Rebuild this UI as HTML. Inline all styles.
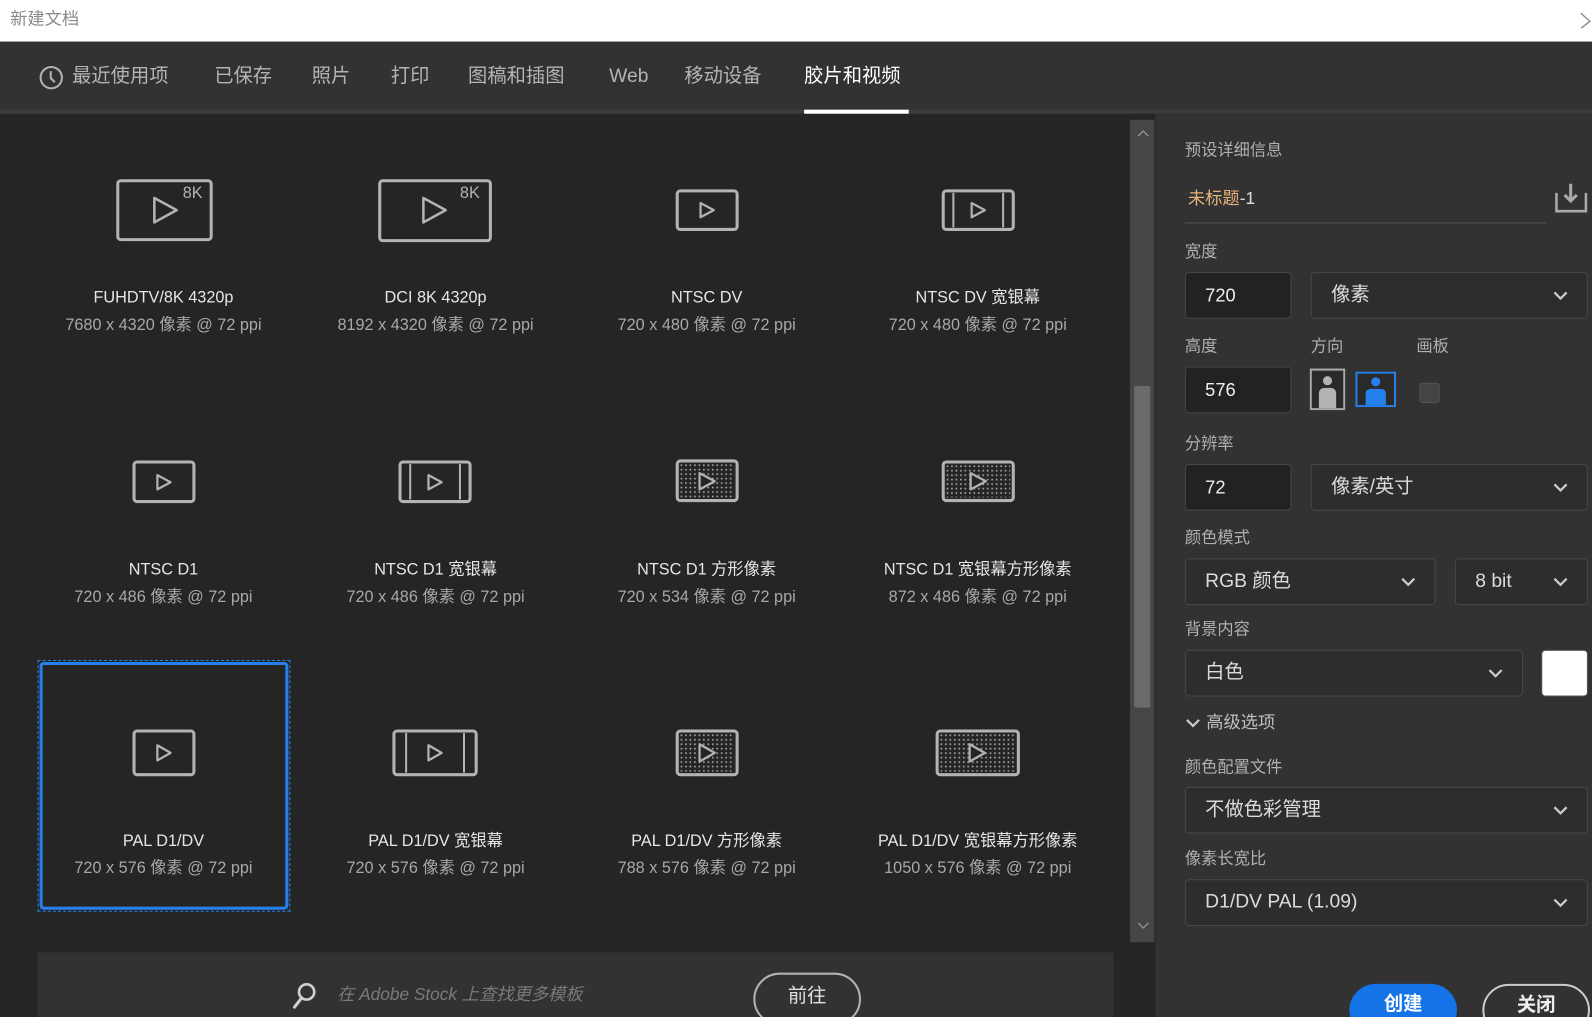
<!DOCTYPE html>
<html><head><meta charset="utf-8"><style>
*{margin:0;padding:0;box-sizing:border-box}
html,body{width:1592px;height:1017px;overflow:hidden;background:#252525}
body{font-family:"Liberation Sans","Noto Sans CJK SC",sans-serif}
#w{position:absolute;left:0;top:0;width:1568px;height:1002px;transform:scale(1.01531);transform-origin:0 0;overflow:hidden;background:#252525}
.a{position:absolute}
.t{position:absolute;white-space:nowrap;line-height:24px}
.tab{position:absolute;top:64px;font-size:19px;line-height:24px;height:24px;color:#b4b4b4}
.nm{position:absolute;width:260px;text-align:center;font-size:16px;line-height:20px;height:20px;color:#e6e6e6}
.sz{position:absolute;width:260px;text-align:center;font-size:16px;line-height:20px;height:20px;color:#a8a8a8}
.lbl{position:absolute;font-size:16px;line-height:20px;color:#b0b0b0}
.inp{position:absolute;background:#222;border:1px solid #474747;border-radius:4px;color:#f0f0f0;font-size:18px;line-height:22px;padding-left:19px;display:flex;align-items:center}
.dd{position:absolute;background:#2d2d2d;border:1px solid #474747;border-radius:4px;color:#dcdcdc;font-size:19px;line-height:24px;padding-left:19px;display:flex;align-items:center}
.dd span,.inp span{display:block;height:24px;line-height:24px}
.dd svg{position:absolute;right:18px;top:50%;margin-top:-5px}
</style></head><body><div id="w">
<svg width="0" height="0" style="position:absolute"><defs>
<pattern id="dots" width="4.4" height="4.4" patternUnits="userSpaceOnUse"><rect x="1" y="1" width="1.6" height="1.6" fill="#a8a8a8"/></pattern>
</defs></svg>
<div class="a" style="left:0;top:0;width:1568px;height:41px;background:#fff"></div>
<div class="t" style="left:10px;top:7px;font-size:17px;color:#8a8a8a">新建文档</div>
<svg class="a" style="left:1556px;top:12px" width="14" height="16"><path d="M1 1 L10 9 L1 16" stroke="#888" stroke-width="1.3" fill="none"/></svg>
<div class="a" style="left:0;top:41px;width:1568px;height:71px;background:#323232"></div>
<div class="a" style="left:0;top:108px;width:1568px;height:4px;background:#3c3c3c"></div>
<div class="a" style="left:792px;top:108px;width:103px;height:4px;background:#fff"></div>
<svg class="a" style="left:38px;top:64px" width="25" height="25"><circle cx="12.5" cy="12.5" r="10.5" stroke="#b4b4b4" stroke-width="2" fill="none"/><path d="M12 6 V13 L16 17" stroke="#b4b4b4" stroke-width="2" fill="none"/></svg>
<div class="tab" style="left:71px">最近使用项</div>
<div class="tab" style="left:211px">已保存</div>
<div class="tab" style="left:307px">照片</div>
<div class="tab" style="left:385px">打印</div>
<div class="tab" style="left:461px">图稿和插图</div>
<div class="tab" style="left:600px">Web</div>
<div class="tab" style="left:674px">移动设备</div>
<div class="tab" style="left:792px;color:#fff">胶片和视频</div>
<div class="a" style="left:1113px;top:118px;width:24px;height:810px;background:#464646"></div>
<div class="a" style="left:1117px;top:380px;width:16px;height:317px;background:#6a6a6a;border-radius:2px"></div>
<svg class="a" style="left:1120px;top:128px" width="12" height="8"><path d="M1 6 L6 1 L11 6" stroke="#999" stroke-width="1.2" fill="none"/></svg>
<svg class="a" style="left:1120px;top:908px" width="12" height="8"><path d="M1 1 L6 6 L11 1" stroke="#999" stroke-width="1.2" fill="none"/></svg>
<div class="a" style="left:1138px;top:112px;width:430px;height:890px;background:#323232"></div>

<svg class="a" style="left:114px;top:176px" width="96" height="62"><rect x="2" y="2" width="92" height="58" rx="3" stroke="#b3b3b3" stroke-width="3" fill="none"/><path d="M38 19 V43 L60 31 Z" stroke="#b3b3b3" stroke-width="2.5" fill="none" stroke-linejoin="round"/><text x="66" y="19" font-size="16" fill="#b3b3b3" font-family="Liberation Sans">8K</text></svg>
<svg class="a" style="left:372px;top:176px" width="113" height="63"><rect x="2" y="2" width="109" height="59" rx="3" stroke="#b3b3b3" stroke-width="3" fill="none"/><path d="M45 19 V43 L67 31 Z" stroke="#b3b3b3" stroke-width="2.5" fill="none" stroke-linejoin="round"/><text x="81" y="19" font-size="16" fill="#b3b3b3" font-family="Liberation Sans">8K</text></svg>
<svg class="a" style="left:665px;top:186px" width="63" height="42"><rect x="2" y="2" width="59" height="38" rx="3" stroke="#b3b3b3" stroke-width="3" fill="none"/><path d="M25 14 V28 L38 21 Z" stroke="#b3b3b3" stroke-width="2.2" fill="none" stroke-linejoin="round"/></svg>
<svg class="a" style="left:927px;top:186px" width="73" height="42"><rect x="2" y="2" width="69" height="38" rx="3" stroke="#b3b3b3" stroke-width="3" fill="none"/><path d="M12 4 V38 M61 4 V38" stroke="#b3b3b3" stroke-width="2"/><path d="M30 14 V28 L43 21 Z" stroke="#b3b3b3" stroke-width="2.2" fill="none" stroke-linejoin="round"/></svg>
<svg class="a" style="left:130px;top:453px" width="63" height="43"><rect x="2" y="2" width="59" height="39" rx="3" stroke="#b3b3b3" stroke-width="3" fill="none"/><path d="M25 15 V29 L38 22 Z" stroke="#b3b3b3" stroke-width="2.2" fill="none" stroke-linejoin="round"/></svg>
<svg class="a" style="left:392px;top:453px" width="73" height="43"><rect x="2" y="2" width="69" height="39" rx="3" stroke="#b3b3b3" stroke-width="3" fill="none"/><path d="M12 4 V39 M61 4 V39" stroke="#b3b3b3" stroke-width="2"/><path d="M30 15 V29 L43 22 Z" stroke="#b3b3b3" stroke-width="2.2" fill="none" stroke-linejoin="round"/></svg>
<svg class="a" style="left:665px;top:452px" width="63" height="43"><rect x="2" y="2" width="59" height="39" rx="3" stroke="#b3b3b3" stroke-width="3" fill="none"/><rect x="5" y="5" width="53" height="33" fill="url(#dots)"/><path d="M24 14 V30 L39 22 Z" stroke="#b3b3b3" stroke-width="2.2" fill="#252525" stroke-linejoin="round"/></svg>
<svg class="a" style="left:927px;top:453px" width="73" height="42"><rect x="2" y="2" width="69" height="38" rx="3" stroke="#b3b3b3" stroke-width="3" fill="none"/><rect x="5" y="5" width="63" height="32" fill="url(#dots)"/><path d="M29 13 V29 L44 21 Z" stroke="#b3b3b3" stroke-width="2.2" fill="#252525" stroke-linejoin="round"/></svg>
<svg class="a" style="left:130px;top:718px" width="63" height="47"><rect x="2" y="2" width="59" height="43" rx="3" stroke="#b3b3b3" stroke-width="3" fill="none"/><path d="M25 16 V31 L38 23.5 Z" stroke="#b3b3b3" stroke-width="2.2" fill="none" stroke-linejoin="round"/></svg>
<svg class="a" style="left:386px;top:718px" width="85" height="47"><rect x="2" y="2" width="81" height="43" rx="3" stroke="#b3b3b3" stroke-width="3" fill="none"/><path d="M14 4 V43 M71 4 V43" stroke="#b3b3b3" stroke-width="2"/><path d="M36 16 V31 L49 23.5 Z" stroke="#b3b3b3" stroke-width="2.2" fill="none" stroke-linejoin="round"/></svg>
<svg class="a" style="left:665px;top:718px" width="63" height="47"><rect x="2" y="2" width="59" height="43" rx="3" stroke="#b3b3b3" stroke-width="3" fill="none"/><rect x="5" y="5" width="53" height="37" fill="url(#dots)"/><path d="M24 15 V32 L39 23.5 Z" stroke="#b3b3b3" stroke-width="2.2" fill="#252525" stroke-linejoin="round"/></svg>
<svg class="a" style="left:921px;top:718px" width="84" height="47"><rect x="2" y="2" width="80" height="43" rx="3" stroke="#b3b3b3" stroke-width="3" fill="none"/><rect x="5" y="5" width="74" height="37" fill="url(#dots)"/><path d="M34 15 V32 L49 23.5 Z" stroke="#b3b3b3" stroke-width="2.2" fill="#252525" stroke-linejoin="round"/></svg>

<div class="a" style="left:37px;top:650px;width:249px;height:248px;border:1px dashed #2680eb"></div>
<div class="a" style="left:39px;top:652px;width:245px;height:244px;border:3px solid #2680eb;border-radius:4px"></div>

<div class="nm" style="left:31px;top:284px">FUHDTV/8K 4320p</div><div class="sz" style="left:31px;top:311px">7680 x 4320 像素 @ 72 ppi</div>
<div class="nm" style="left:299px;top:284px">DCI 8K 4320p</div><div class="sz" style="left:299px;top:311px">8192 x 4320 像素 @ 72 ppi</div>
<div class="nm" style="left:566px;top:284px">NTSC DV</div><div class="sz" style="left:566px;top:311px">720 x 480 像素 @ 72 ppi</div>
<div class="nm" style="left:833px;top:284px">NTSC DV 宽银幕</div><div class="sz" style="left:833px;top:311px">720 x 480 像素 @ 72 ppi</div>
<div class="nm" style="left:31px;top:552px">NTSC D1</div><div class="sz" style="left:31px;top:579px">720 x 486 像素 @ 72 ppi</div>
<div class="nm" style="left:299px;top:552px">NTSC D1 宽银幕</div><div class="sz" style="left:299px;top:579px">720 x 486 像素 @ 72 ppi</div>
<div class="nm" style="left:566px;top:552px">NTSC D1 方形像素</div><div class="sz" style="left:566px;top:579px">720 x 534 像素 @ 72 ppi</div>
<div class="nm" style="left:833px;top:552px">NTSC D1 宽银幕方形像素</div><div class="sz" style="left:833px;top:579px">872 x 486 像素 @ 72 ppi</div>
<div class="nm" style="left:31px;top:819px">PAL D1/DV</div><div class="sz" style="left:31px;top:846px">720 x 576 像素 @ 72 ppi</div>
<div class="nm" style="left:299px;top:819px">PAL D1/DV 宽银幕</div><div class="sz" style="left:299px;top:846px">720 x 576 像素 @ 72 ppi</div>
<div class="nm" style="left:566px;top:819px">PAL D1/DV 方形像素</div><div class="sz" style="left:566px;top:846px">788 x 576 像素 @ 72 ppi</div>
<div class="nm" style="left:833px;top:819px">PAL D1/DV 宽银幕方形像素</div><div class="sz" style="left:833px;top:846px">1050 x 576 像素 @ 72 ppi</div>

<div class="a" style="left:37px;top:938px;width:1060px;height:80px;background:#323232"></div>
<svg class="a" style="left:287px;top:967px" width="26" height="28"><circle cx="15" cy="10" r="7.5" stroke="#d0d0d0" stroke-width="2.6" fill="none"/><path d="M10 16 L3 25" stroke="#d0d0d0" stroke-width="3" stroke-linecap="round"/></svg>
<div class="t" style="left:332px;top:968px;font-size:17px;color:#7a7a7a;font-style:italic">在 Adobe Stock 上查找更多模板</div>
<div class="a" style="left:742px;top:958px;width:106px;height:52px;border:2px solid #b3b3b3;border-radius:26px;color:#e0e0e0;font-size:19px;line-height:24px;text-align:center;padding-top:10px">前往</div>

<div class="lbl" style="left:1167px;top:139px">预设详细信息</div>
<div class="t" style="left:1170px;top:184px;font-size:17px"><span style="color:#e6b37a">未标题</span><span style="color:#e0e0e0">-1</span></div>
<div class="a" style="left:1167px;top:219px;width:356px;height:1px;background:#555"></div>
<svg class="a" style="left:1531px;top:180px" width="33" height="30"><path d="M2 10 V28 H31 V10" stroke="#aaa" stroke-width="2.5" fill="none"/><path d="M16 1 V17 M10 12 L16 18 L22 12" stroke="#aaa" stroke-width="3" fill="none"/></svg>

<div class="lbl" style="left:1167px;top:239px">宽度</div>
<div class="inp" style="left:1167px;top:268px;width:105px;height:46px"><span>720</span></div>
<div class="dd" style="left:1291px;top:268px;width:273px;height:46px"><span>像素</span><svg width="16" height="10"><path d="M2 2 L8 8 L14 2" stroke="#ccc" stroke-width="2.2" fill="none"/></svg></div>

<div class="lbl" style="left:1167px;top:332px">高度</div>
<div class="lbl" style="left:1291px;top:332px">方向</div>
<div class="lbl" style="left:1395px;top:332px">画板</div>
<div class="inp" style="left:1167px;top:361px;width:105px;height:46px"><span>576</span></div>
<svg class="a" style="left:1290px;top:363px" width="35" height="41"><rect x="1" y="1" width="33" height="39" fill="#2a2a2a" stroke="#aaa" stroke-width="2"/><circle cx="17.5" cy="12" r="4.5" fill="#b3b3b3"/><path d="M9 39 V25 Q9 19 15 19 H20 Q26 19 26 25 V39 Z" fill="#b3b3b3"/></svg>
<svg class="a" style="left:1335px;top:366px" width="40" height="35"><rect x="1" y="1" width="38" height="33" fill="#2a2a2a" stroke="#2680eb" stroke-width="2"/><circle cx="20" cy="10" r="4.5" fill="#2680eb"/><path d="M10 33 V22 Q10 17 15 17 H25 Q30 17 30 22 V33 Z" fill="#2680eb"/></svg>
<div class="a" style="left:1398px;top:377px;width:20px;height:20px;background:#444;border:1px solid #555;border-radius:3px"></div>

<div class="lbl" style="left:1167px;top:428px">分辨率</div>
<div class="inp" style="left:1167px;top:457px;width:105px;height:46px"><span>72</span></div>
<div class="dd" style="left:1291px;top:457px;width:273px;height:46px"><span>像素/英寸</span><svg width="16" height="10"><path d="M2 2 L8 8 L14 2" stroke="#ccc" stroke-width="2.2" fill="none"/></svg></div>

<div class="lbl" style="left:1167px;top:521px">颜色模式</div>
<div class="dd" style="left:1167px;top:550px;width:247px;height:46px"><span>RGB 颜色</span><svg width="16" height="10"><path d="M2 2 L8 8 L14 2" stroke="#ccc" stroke-width="2.2" fill="none"/></svg></div>
<div class="dd" style="left:1433px;top:550px;width:131px;height:46px"><span>8 bit</span><svg width="16" height="10"><path d="M2 2 L8 8 L14 2" stroke="#ccc" stroke-width="2.2" fill="none"/></svg></div>

<div class="lbl" style="left:1167px;top:611px">背景内容</div>
<div class="dd" style="left:1167px;top:640px;width:333px;height:46px"><span>白色</span><svg width="16" height="10"><path d="M2 2 L8 8 L14 2" stroke="#ccc" stroke-width="2.2" fill="none"/></svg></div>
<div class="a" style="left:1518px;top:640px;width:46px;height:46px;background:#fff;border:1px solid #555;border-radius:4px"></div>

<svg class="a" style="left:1167px;top:707px" width="16" height="12"><path d="M2 2 L8 8 L14 2" stroke="#ccc" stroke-width="2.2" fill="none"/></svg>
<div class="lbl" style="left:1188px;top:702px;font-size:17px;color:#c0c0c0">高级选项</div>

<div class="lbl" style="left:1167px;top:747px">颜色配置文件</div>
<div class="dd" style="left:1167px;top:775px;width:397px;height:46px"><span>不做色彩管理</span><svg width="16" height="10"><path d="M2 2 L8 8 L14 2" stroke="#ccc" stroke-width="2.2" fill="none"/></svg></div>
<div class="lbl" style="left:1167px;top:837px">像素长宽比</div>
<div class="dd" style="left:1167px;top:866px;width:397px;height:46px"><span>D1/DV PAL (1.09)</span><svg width="16" height="10"><path d="M2 2 L8 8 L14 2" stroke="#ccc" stroke-width="2.2" fill="none"/></svg></div>

<div class="a" style="left:1329px;top:969px;width:106px;height:52px;background:#1473e6;border-radius:26px;color:#fff;font-size:19px;line-height:24px;font-weight:bold;text-align:center;padding-top:9px">创建</div>
<div class="a" style="left:1460px;top:969px;width:106px;height:52px;border:2px solid #ccc;border-radius:26px;color:#eee;font-size:19px;line-height:24px;font-weight:bold;text-align:center;padding-top:8px">关闭</div>
</div></body></html>
